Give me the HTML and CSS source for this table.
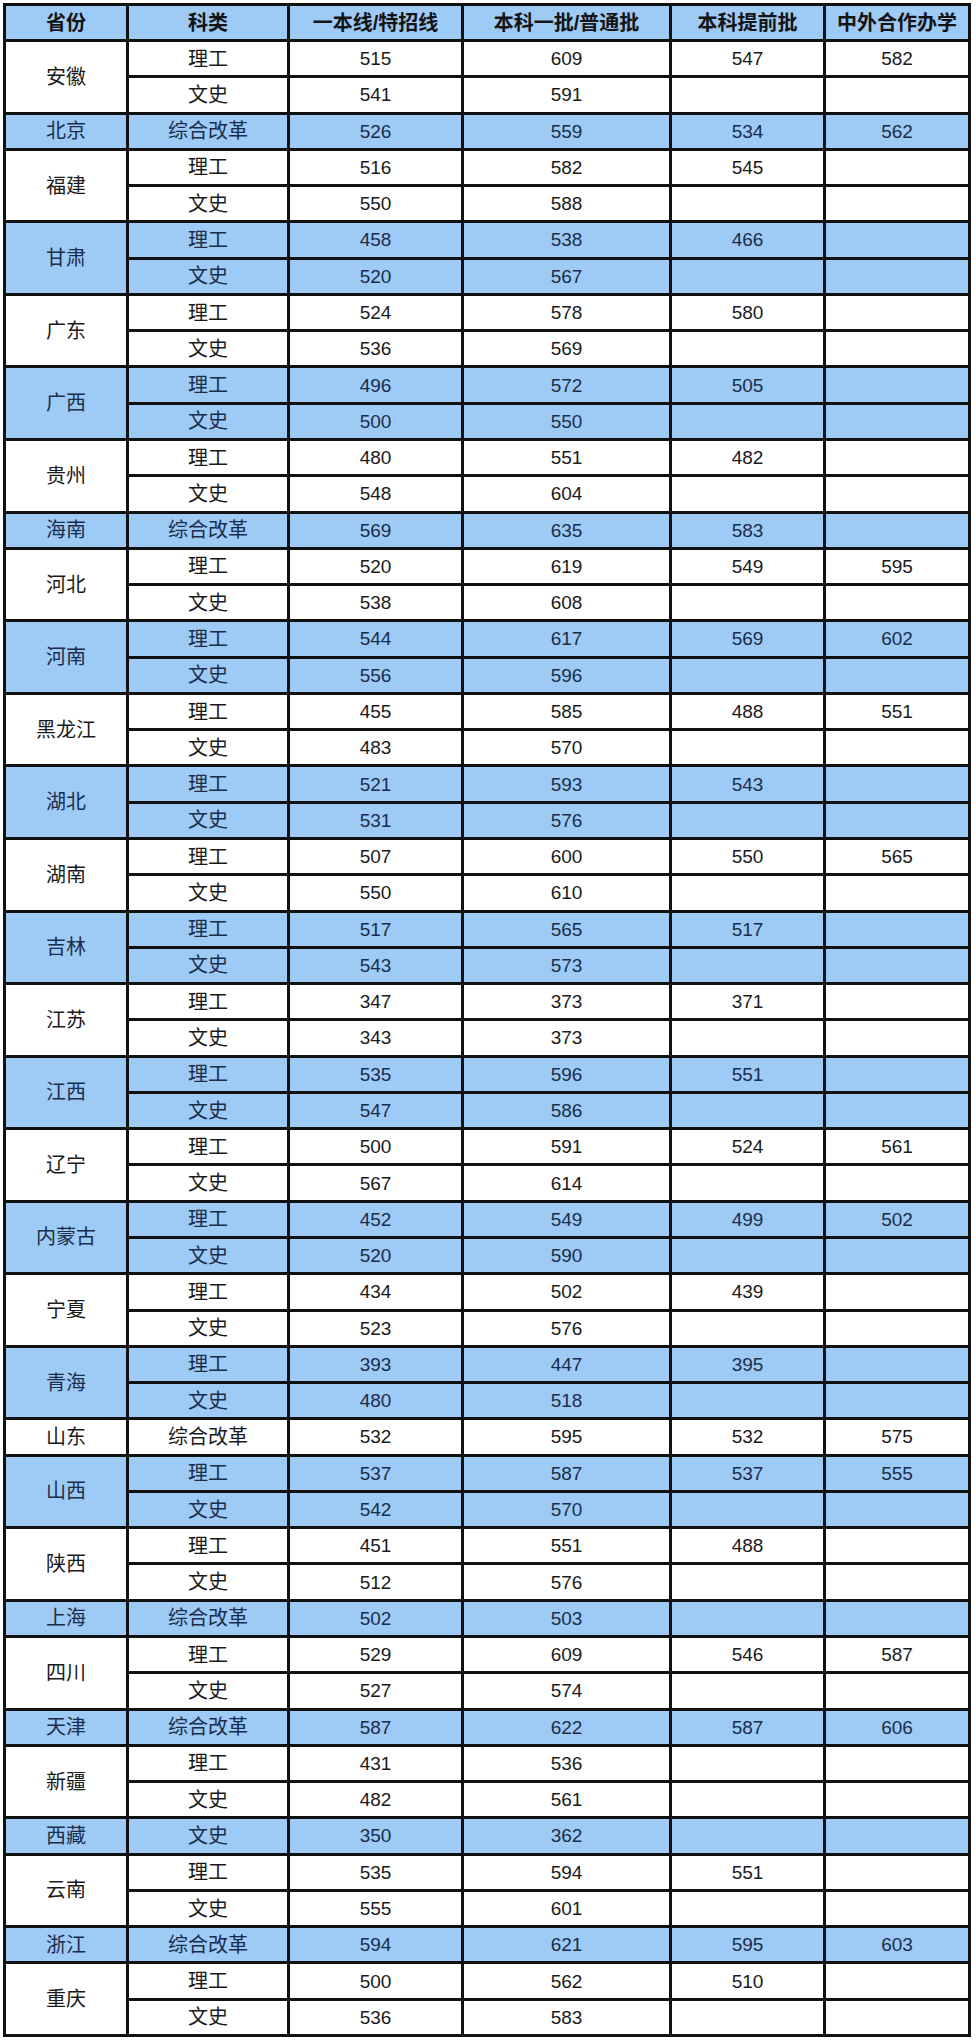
FILE: index.html
```html
<!DOCTYPE html>
<html lang="zh-CN">
<head>
<meta charset="utf-8">
<title>分数线</title>
<link rel="stylesheet" href="styles.css">
</head>
<body>
<div class="table">
  <div class="hd">省份</div><div class="hd">科类</div><div class="hd">一本线/特招线</div><div class="hd">本科一批/普通批</div><div class="hd">本科提前批</div><div class="hd">中外合作办学</div>

  <div class="grp"><div class="p r2">安徽</div><div>理工</div><div class="n">515</div><div class="n">609</div><div class="n">547</div><div class="n">582</div><div>文史</div><div class="n">541</div><div class="n">591</div><div></div><div></div></div>
  <div class="grp blue"><div class="p">北京</div><div>综合改革</div><div class="n">526</div><div class="n">559</div><div class="n">534</div><div class="n">562</div></div>
  <div class="grp"><div class="p r2">福建</div><div>理工</div><div class="n">516</div><div class="n">582</div><div class="n">545</div><div></div><div>文史</div><div class="n">550</div><div class="n">588</div><div></div><div></div></div>
  <div class="grp blue"><div class="p r2">甘肃</div><div>理工</div><div class="n">458</div><div class="n">538</div><div class="n">466</div><div></div><div>文史</div><div class="n">520</div><div class="n">567</div><div></div><div></div></div>
  <div class="grp"><div class="p r2">广东</div><div>理工</div><div class="n">524</div><div class="n">578</div><div class="n">580</div><div></div><div>文史</div><div class="n">536</div><div class="n">569</div><div></div><div></div></div>
  <div class="grp blue"><div class="p r2">广西</div><div>理工</div><div class="n">496</div><div class="n">572</div><div class="n">505</div><div></div><div>文史</div><div class="n">500</div><div class="n">550</div><div></div><div></div></div>
  <div class="grp"><div class="p r2">贵州</div><div>理工</div><div class="n">480</div><div class="n">551</div><div class="n">482</div><div></div><div>文史</div><div class="n">548</div><div class="n">604</div><div></div><div></div></div>
  <div class="grp blue"><div class="p">海南</div><div>综合改革</div><div class="n">569</div><div class="n">635</div><div class="n">583</div><div></div></div>
  <div class="grp"><div class="p r2">河北</div><div>理工</div><div class="n">520</div><div class="n">619</div><div class="n">549</div><div class="n">595</div><div>文史</div><div class="n">538</div><div class="n">608</div><div></div><div></div></div>
  <div class="grp blue"><div class="p r2">河南</div><div>理工</div><div class="n">544</div><div class="n">617</div><div class="n">569</div><div class="n">602</div><div>文史</div><div class="n">556</div><div class="n">596</div><div></div><div></div></div>
  <div class="grp"><div class="p r2">黑龙江</div><div>理工</div><div class="n">455</div><div class="n">585</div><div class="n">488</div><div class="n">551</div><div>文史</div><div class="n">483</div><div class="n">570</div><div></div><div></div></div>
  <div class="grp blue"><div class="p r2">湖北</div><div>理工</div><div class="n">521</div><div class="n">593</div><div class="n">543</div><div></div><div>文史</div><div class="n">531</div><div class="n">576</div><div></div><div></div></div>
  <div class="grp"><div class="p r2">湖南</div><div>理工</div><div class="n">507</div><div class="n">600</div><div class="n">550</div><div class="n">565</div><div>文史</div><div class="n">550</div><div class="n">610</div><div></div><div></div></div>
  <div class="grp blue"><div class="p r2">吉林</div><div>理工</div><div class="n">517</div><div class="n">565</div><div class="n">517</div><div></div><div>文史</div><div class="n">543</div><div class="n">573</div><div></div><div></div></div>
  <div class="grp"><div class="p r2">江苏</div><div>理工</div><div class="n">347</div><div class="n">373</div><div class="n">371</div><div></div><div>文史</div><div class="n">343</div><div class="n">373</div><div></div><div></div></div>
  <div class="grp blue"><div class="p r2">江西</div><div>理工</div><div class="n">535</div><div class="n">596</div><div class="n">551</div><div></div><div>文史</div><div class="n">547</div><div class="n">586</div><div></div><div></div></div>
  <div class="grp"><div class="p r2">辽宁</div><div>理工</div><div class="n">500</div><div class="n">591</div><div class="n">524</div><div class="n">561</div><div>文史</div><div class="n">567</div><div class="n">614</div><div></div><div></div></div>
  <div class="grp blue"><div class="p r2">内蒙古</div><div>理工</div><div class="n">452</div><div class="n">549</div><div class="n">499</div><div class="n">502</div><div>文史</div><div class="n">520</div><div class="n">590</div><div></div><div></div></div>
  <div class="grp"><div class="p r2">宁夏</div><div>理工</div><div class="n">434</div><div class="n">502</div><div class="n">439</div><div></div><div>文史</div><div class="n">523</div><div class="n">576</div><div></div><div></div></div>
  <div class="grp blue"><div class="p r2">青海</div><div>理工</div><div class="n">393</div><div class="n">447</div><div class="n">395</div><div></div><div>文史</div><div class="n">480</div><div class="n">518</div><div></div><div></div></div>
  <div class="grp"><div class="p">山东</div><div>综合改革</div><div class="n">532</div><div class="n">595</div><div class="n">532</div><div class="n">575</div></div>
  <div class="grp blue"><div class="p r2">山西</div><div>理工</div><div class="n">537</div><div class="n">587</div><div class="n">537</div><div class="n">555</div><div>文史</div><div class="n">542</div><div class="n">570</div><div></div><div></div></div>
  <div class="grp"><div class="p r2">陕西</div><div>理工</div><div class="n">451</div><div class="n">551</div><div class="n">488</div><div></div><div>文史</div><div class="n">512</div><div class="n">576</div><div></div><div></div></div>
  <div class="grp blue"><div class="p">上海</div><div>综合改革</div><div class="n">502</div><div class="n">503</div><div></div><div></div></div>
  <div class="grp"><div class="p r2">四川</div><div>理工</div><div class="n">529</div><div class="n">609</div><div class="n">546</div><div class="n">587</div><div>文史</div><div class="n">527</div><div class="n">574</div><div></div><div></div></div>
  <div class="grp blue"><div class="p">天津</div><div>综合改革</div><div class="n">587</div><div class="n">622</div><div class="n">587</div><div class="n">606</div></div>
  <div class="grp"><div class="p r2">新疆</div><div>理工</div><div class="n">431</div><div class="n">536</div><div></div><div></div><div>文史</div><div class="n">482</div><div class="n">561</div><div></div><div></div></div>
  <div class="grp blue"><div class="p">西藏</div><div>文史</div><div class="n">350</div><div class="n">362</div><div></div><div></div></div>
  <div class="grp"><div class="p r2">云南</div><div>理工</div><div class="n">535</div><div class="n">594</div><div class="n">551</div><div></div><div>文史</div><div class="n">555</div><div class="n">601</div><div></div><div></div></div>
  <div class="grp blue"><div class="p">浙江</div><div>综合改革</div><div class="n">594</div><div class="n">621</div><div class="n">595</div><div class="n">603</div></div>
  <div class="grp"><div class="p r2">重庆</div><div>理工</div><div class="n">500</div><div class="n">562</div><div class="n">510</div><div></div><div>文史</div><div class="n">536</div><div class="n">583</div><div></div><div></div></div>
</div>
</body>
</html>
```

FILE: styles.css
```css
html, body {
  margin: 0;
  padding: 0;
  background: #ffffff;
}

body {
  font-family: "Liberation Sans", "Noto Sans CJK SC", sans-serif;
  color: #1a1a1a;
}

.table {
  display: grid;
  grid-template-columns: 120px 158px 171px 205px 151px 142px;
  grid-template-rows: 33px repeat(55, 1fr);
  gap: 3px;
  padding: 3px;
  width: 968px;
  height: 2034px;
  box-sizing: border-box;
  margin: 3px 0 0 3px;
  background: #111111;
}

.grp {
  display: contents;
}

.hd,
.grp > div {
  display: flex;
  align-items: center;
  justify-content: center;
  background: #ffffff;
  font-size: 20px;
  line-height: 1;
}

.grp > .n {
  font-size: 19px;
}

.grp > .r2 {
  grid-row: span 2;
}

.grp.blue > div {
  background: #9ecaf6;
  color: #1a2d4a;
}

.hd {
  background: #9ecaf6;
  font-weight: bold;
  color: #141414;
}
```
